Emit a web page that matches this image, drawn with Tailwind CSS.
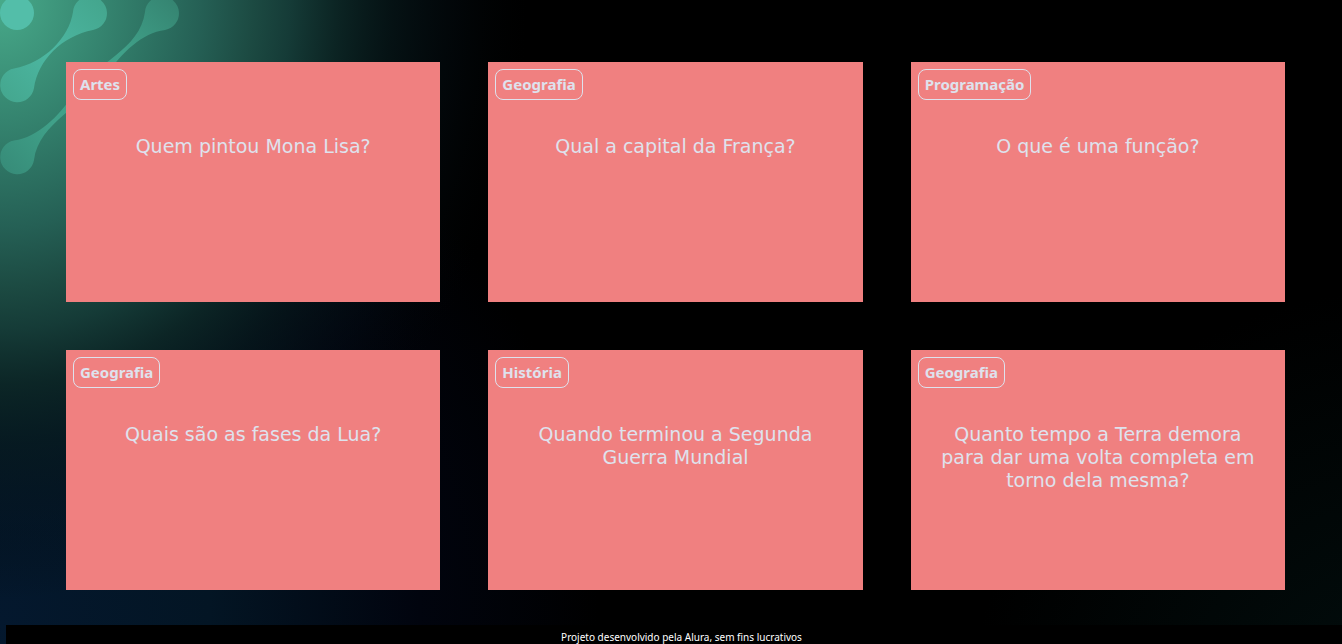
<!DOCTYPE html>
<html lang="pt-BR">
<head>
<meta charset="utf-8">
<title>Flashcards</title>
<script src="https://cdn.jsdelivr.net/npm/@tailwindcss/browser@4"></script>
</head>
<body class="relative min-h-screen flex flex-col justify-between overflow-x-hidden bg-black font-['DejaVu_Sans',sans-serif] text-[#dee2ed]">
<svg class="absolute inset-0 w-full h-full" aria-hidden="true">
  <defs>
    <radialGradient id="green" gradientUnits="userSpaceOnUse" cx="0" cy="0" r="600">
      <stop offset="0" stop-color="#48aa8a"/>
      <stop offset=".2" stop-color="#35846f"/>
      <stop offset=".38" stop-color="#256055"/>
      <stop offset=".48" stop-color="#1c4a42"/>
      <stop offset=".55" stop-color="#153b37"/>
      <stop offset=".64" stop-color="#0d2827" stop-opacity=".9"/>
      <stop offset=".74" stop-color="#081c1f" stop-opacity=".65"/>
      <stop offset=".87" stop-color="#05121a" stop-opacity=".3"/>
      <stop offset="1" stop-color="#020808" stop-opacity="0"/>
    </radialGradient>
    <radialGradient id="blue" gradientUnits="userSpaceOnUse" cx="0" cy="620" r="600">
      <stop offset="0" stop-color="#04182e"/>
      <stop offset=".35" stop-color="#031524"/>
      <stop offset=".7" stop-color="#01040e"/>
      <stop offset="1" stop-color="#000000"/>
    </radialGradient>
    <radialGradient id="teal" gradientUnits="userSpaceOnUse" cx="1400" cy="720" r="430">
      <stop offset="0" stop-color="#020e0e"/>
      <stop offset="1" stop-color="#020e0e" stop-opacity="0"/>
    </radialGradient>
    <linearGradient id="dumbbell-near" gradientUnits="userSpaceOnUse" x1="0" y1="100" x2="100" y2="0"><stop offset="0" stop-color="#44a68e"/><stop offset=".5" stop-color="#4cb7a1"/><stop offset="1" stop-color="#44a68e"/></linearGradient>
    <linearGradient id="dumbbell-far" gradientUnits="userSpaceOnUse" x1="0" y1="175" x2="175" y2="0"><stop offset="0" stop-color="#368a77"/><stop offset=".3" stop-color="#40a189"/><stop offset=".7" stop-color="#40a189"/><stop offset="1" stop-color="#358471"/></linearGradient>
  </defs>
  <rect width="100%" height="100%" fill="url(#blue)"/>
  <rect width="100%" height="100%" fill="url(#green)" transform="scale(.88 1)"/>
  <rect width="100%" height="100%" fill="url(#teal)"/>
  <circle cx="17" cy="13" r="17" fill="#53bea9"/>
  <path fill="url(#dumbbell-near)" d="M73 12A17 17 0 1 1 93 30C62 36 38 60 34 88A17 17 0 1 1 14 68.500C44 63 69 38 73 12Z"/>
  <path fill="url(#dumbbell-far)" d="M145 12A17 17 0 1 1 165 30C142 33 122 52 106 76C84 106 39 122 34 160A17 17 0 1 1 14 140.500C38 137 58 117 74 94C96 62 140 50 145 12Z"/>
</svg>
<main class="relative grid grid-cols-3 gap-12 pt-[62px] pb-[35px] pl-[66px] pr-[57px]">
  <article class="h-60 bg-[#f08080] p-[7px] flex flex-col items-start gap-[35px]">
    <h2 class="border border-[#dee2ed] rounded-lg px-1.5 py-1.5 font-['Noto_Sans',sans-serif] text-[15px] leading-[17px] font-bold">Artes</h2>
    <p class="w-full px-4 text-center text-[19px] leading-[23px]">Quem pintou Mona Lisa?</p>
  </article>
  <article class="h-60 bg-[#f08080] p-[7px] flex flex-col items-start gap-[35px]">
    <h2 class="border border-[#dee2ed] rounded-lg px-1.5 py-1.5 font-['Noto_Sans',sans-serif] text-[15px] leading-[17px] font-bold">Geografia</h2>
    <p class="w-full px-4 text-center text-[19px] leading-[23px]">Qual a capital da França?</p>
  </article>
  <article class="h-60 bg-[#f08080] p-[7px] flex flex-col items-start gap-[35px]">
    <h2 class="border border-[#dee2ed] rounded-lg px-1.5 py-1.5 font-['Noto_Sans',sans-serif] text-[15px] leading-[17px] font-bold">Programação</h2>
    <p class="w-full px-4 text-center text-[19px] leading-[23px]">O que é uma função?</p>
  </article>
  <article class="h-60 bg-[#f08080] p-[7px] flex flex-col items-start gap-[35px]">
    <h2 class="border border-[#dee2ed] rounded-lg px-1.5 py-1.5 font-['Noto_Sans',sans-serif] text-[15px] leading-[17px] font-bold">Geografia</h2>
    <p class="w-full px-4 text-center text-[19px] leading-[23px]">Quais são as fases da Lua?</p>
  </article>
  <article class="h-60 bg-[#f08080] p-[7px] flex flex-col items-start gap-[35px]">
    <h2 class="border border-[#dee2ed] rounded-lg px-1.5 py-1.5 font-['Noto_Sans',sans-serif] text-[15px] leading-[17px] font-bold">História</h2>
    <p class="w-full px-4 text-center text-[19px] leading-[23px]">Quando terminou a Segunda Guerra Mundial</p>
  </article>
  <article class="h-60 bg-[#f08080] p-[7px] flex flex-col items-start gap-[35px]">
    <h2 class="border border-[#dee2ed] rounded-lg px-1.5 py-1.5 font-['Noto_Sans',sans-serif] text-[15px] leading-[17px] font-bold">Geografia</h2>
    <p class="w-full px-4 text-center text-[19px] leading-[23px]">Quanto tempo a Terra demora para dar uma volta completa em torno dela mesma?</p>
  </article>
</main>
<footer class="relative ml-1.5 pl-[15px] pt-1.5 pb-px bg-black text-center text-white font-['Noto_Sans',sans-serif] text-[10px] leading-[12px]">
  <p>Projeto desenvolvido pela Alura, sem fins lucrativos</p>
</footer>
</body>
</html>
